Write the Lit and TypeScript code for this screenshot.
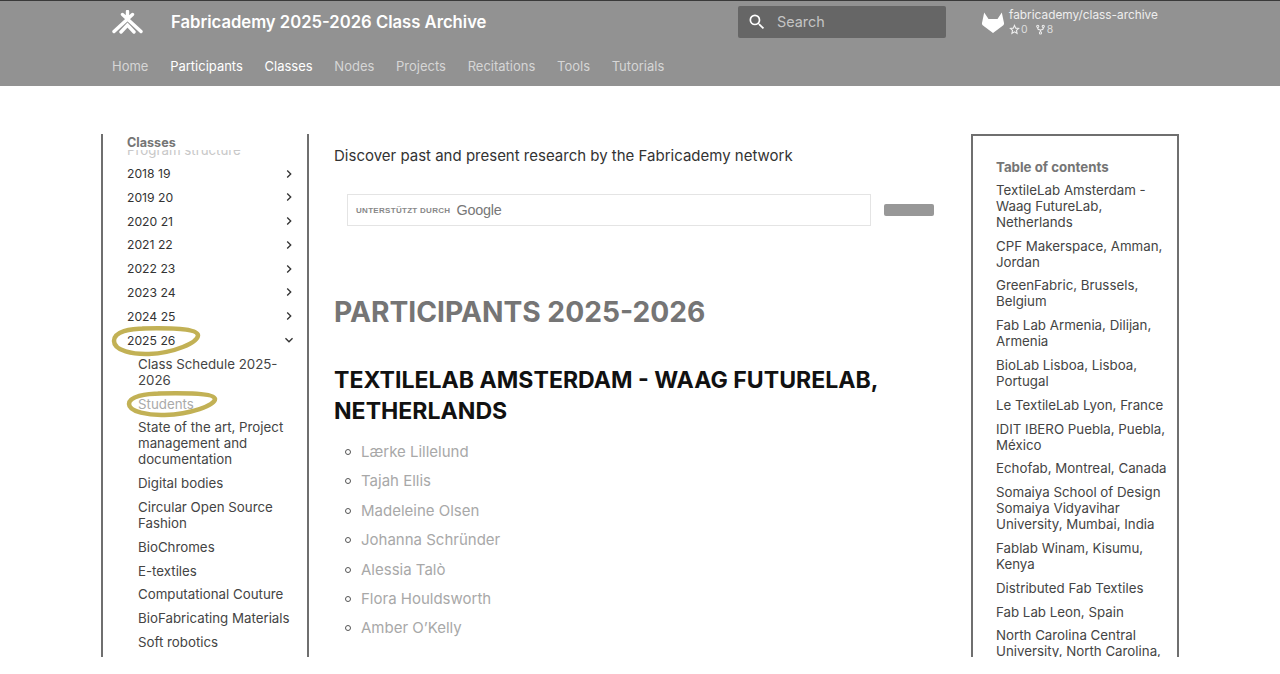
import { LitElement, html, css, svg } from 'lit';
import { customElement } from 'lit/decorators.js';

const tabs = ['Home', 'Participants', 'Classes', 'Nodes', 'Projects', 'Recitations', 'Tools', 'Tutorials'];
const years = ['2018 19', '2019 20', '2020 21', '2021 22', '2022 23', '2023 24', '2024 25'];
const classes = [
  'Class Schedule 2025-2026',
  'Students',
  'State of the art, Project management and documentation',
  'Digital bodies',
  'Circular Open Source Fashion',
  'BioChromes',
  'E-textiles',
  'Computational Couture',
  'BioFabricating Materials',
  'Soft robotics',
];
const students = ['Lærke Lillelund', 'Tajah Ellis', 'Madeleine Olsen', 'Johanna Schründer', 'Alessia Talò', 'Flora Houldsworth', 'Amber O’Kelly'];
const toc = [
  'TextileLab Amsterdam - Waag FutureLab, Netherlands',
  'CPF Makerspace, Amman, Jordan',
  'GreenFabric, Brussels, Belgium',
  'Fab Lab Armenia, Dilijan, Armenia',
  'BioLab Lisboa, Lisboa, Portugal',
  'Le TextileLab Lyon, France',
  'IDIT IBERO Puebla, Puebla, México',
  'Echofab, Montreal, Canada',
  'Somaiya School of Design Somaiya Vidyavihar University, Mumbai, India',
  'Fablab Winam, Kisumu, Kenya',
  'Distributed Fab Textiles',
  'Fab Lab Leon, Spain',
  'North Carolina Central University, North Carolina, USA',
];

const chevron = (open: boolean) => html`<svg class="chev" viewBox="0 0 24 24" width="16" height="16">
  <path d=${open ? 'M7.4 8.6 12 13.2l4.6-4.6L18 10l-6 6-6-6z' : 'M8.6 16.6 13.2 12 8.6 7.4 10 6l6 6-6 6z'} fill="#333"></path>
</svg>`;

// hand drawn marker ring
const ring = (cls: string, w: number, h: number) => html`<svg class="ring ${cls}" viewBox="0 0 ${w} ${h}" width=${w} height=${h}>
  ${svg`<path d="M${w * 0.42} 3.5C${w * 0.2} 3 3 7 3 ${h * 0.5}C3 ${h - 6} ${w * 0.25} ${h - 2.5} ${w * 0.42} ${h - 3}C${w * 0.7} ${h - 4} ${w - 3} ${h * 0.55} ${w - 3} ${h * 0.32}C${w - 4} 3 ${w * 0.65} 3 ${w * 0.35} 3.5" fill="none" stroke="#c2b155" stroke-width="4.500" stroke-linecap="round"></path>`}
</svg>`;

@customElement('app-root')
export class AppRoot extends LitElement {
  static styles = css`
    :host {
      display: block;
      height: 674px;
      overflow: hidden;
      background: #fff;
      font-family: Inter, 'Open Sans', sans-serif;
      color: #333;
    }
    header {
      height: 85px;
      background: #929292;
      border-top: 1px solid #3a3a3a;
      color: #fff;
    }
    .wrap {
      width: 1056px;
      margin: 0 auto;
    }
    .top {
      display: flex;
      align-items: center;
      height: 41px;
    }
    .logo {
      width: 31px;
      height: 24px;
      margin-right: 28px;
      flex: none;
    }
    .site {
      font-size: 16.65px;
      font-weight: 600;
      width: 567px;
      white-space: nowrap;
    }
    .search {
      width: 208px;
      height: 32px;
      background: #666;
      border-radius: 2px;
      display: flex;
      align-items: center;
      font-size: 14.4px;
      color: #c4c4c4;
      flex: none;
    }
    .search svg {
      margin: 0 10px 0 9px;
    }
    .repo {
      margin-left: 35px;
      display: flex;
      align-items: center;
      gap: 4px;
      font-size: 11.85px;
      color: #eee;
    }
    .repo .name {
      line-height: 15px;
      white-space: nowrap;
    }
    .facts {
      display: flex;
      gap: 7px;
      font-size: 10.5px;
      line-height: 13px;
      color: #ddd;
      align-items: center;
    }
    .facts span {
      display: flex;
      align-items: center;
      gap: 1px;
    }
    nav {
      display: flex;
      gap: 21.7px;
      font-size: 13px;
      line-height: 16px;
      margin-top: 16px;
      color: #d6d6d6;
    }
    nav .on {
      color: #fff;
    }
    main {
      width: 1078px;
      margin: 48px 0 0 101px;
      height: 523px;
      display: flex;
      overflow: hidden;
    }
    .side {
      width: 208px;
      box-sizing: border-box;
      border-left: 2px solid #6f6f6f;
      border-right: 2px solid #6f6f6f;
      padding-left: 24px;
      flex: none;
      position: relative;
    }
    .side h4 {
      margin: 0;
      font-size: 12.6px;
      font-weight: 700;
      color: #757575;
      line-height: 16px;
      padding-top: 1px;
      height: 15px;
      position: relative;
      background: #fff;
    }
    .clip {
      height: 10px;
      overflow: hidden;
      font-size: 13.3px;
      color: #c8c8c8;
      line-height: 10px;
    }
    .clip div {
      margin-top: -8px;
      line-height: 16px;
    }
    .year {
      display: flex;
      justify-content: space-between;
      align-items: center;
      width: 170px;
      font-size: 12.2px;
      height: 16px;
      margin-bottom: 7.8px;
      margin-top: 0;
      color: #333;
      position: relative;
    }
    .years {
      padding-top: 5.5px;
      position: relative;
    }
    .chev {
      margin-right: 0;
      flex: none;
    }
    .sub {
      padding-left: 11px;
      width: 158px;
    }
    .sub div {
      font-size: 13.3px;
      line-height: 16px;
      margin-bottom: 7.8px;
      color: #444;
    }
    .sub .active {
      color: #aaa;
    }
    .ring {
      position: absolute;
      pointer-events: none;
    }
    .ring.a {
      left: 8px;
      top: 191px;
    }
    .ring.b {
      left: 23px;
      top: 256px;
    }
    .content {
      width: 637px;
      flex: none;
      padding-left: 25px;
      box-sizing: border-box;
    }
    .intro {
      margin: 13px 0 0;
      font-size: 15px;
      line-height: 18px;
    }
    .cse {
      display: flex;
      align-items: center;
      margin: 29px 0 0 13px;
    }
    .cse-box {
      width: 524px;
      height: 32px;
      box-sizing: border-box;
      border: 1px solid #e4e4e4;
      display: flex;
      align-items: center;
      padding-left: 8px;
      font-family: 'Liberation Sans', sans-serif;
      font-size: 8px;
      font-weight: 700;
      color: #888;
      letter-spacing: 0.3px;
    }
    .cse-box b {
      font-size: 14.4px;
      font-weight: 400;
      letter-spacing: -0.2px;
      color: #777;
      margin-left: 6px;
    }
    .cse-btn {
      width: 50px;
      height: 12px;
      background: #989898;
      border-radius: 2px;
      margin-left: 13px;
    }
    h1 {
      margin: 67.5px 0 0;
      font-size: 28.2px;
      line-height: 36px;
      font-weight: 700;
      color: #757575;
      white-space: nowrap;
    }
    h2 {
      margin: 35.5px 0 0;
      font-size: 23.1px;
      line-height: 31px;
      font-weight: 700;
      color: #111;
      width: 560px;
    }
    ul {
      margin: 16px 0 0;
      padding: 0;
      list-style: none;
    }
    li {
      display: flex;
      align-items: center;
      font-size: 15px;
      line-height: 18px;
      margin-bottom: 11.4px;
      color: #a8a8a8;
    }
    li::before {
      content: '';
      width: 4px;
      height: 4px;
      border: 1px solid #555;
      border-radius: 50%;
      margin: 0 10px 0 11px;
    }
    .toc {
      margin-left: 25px;
      width: 208px;
      box-sizing: border-box;
      height: 540px;
      border: 2px solid #6f6f6f;
      padding: 22.5px 10px 0 23px;
      flex: none;
    }
    .toc h4 {
      margin: 0;
      font-size: 13.3px;
      font-weight: 700;
      line-height: 16px;
      color: #757575;
    }
    .toc h4 + div {
      margin-top: 7.3px;
    }
    .toc div {
      font-size: 13.3px;
      line-height: 16px;
      margin-top: 7.8px;
      color: #444;
    }
  `;

  render() {
    return html`
      <header>
        <div class="wrap">
          <div class="top">
            <svg class="logo" viewBox="0 0 31 24">
              <path d="M2 21.500 20.500 4.500M29 21.500 10.500 4.500M9 22l6.500-7 6.500 7M15.500 1.500v4" stroke="#fff" stroke-width="3.400" fill="none" stroke-linecap="round"></path>
            </svg>
            <div class="site">Fabricademy 2025-2026 Class Archive</div>
            <div class="search">
              <svg viewBox="0 0 24 24" width="20" height="20"><path fill="#fff" d="M9.500 3A6.500 6.500 0 0 1 16 9.500c0 1.610-.59 3.090-1.560 4.230l.27.27h.79l5 5-1.500 1.500-5-5v-.79l-.27-.27A6.516 6.516 0 0 1 9.500 16 6.500 6.500 0 0 1 3 9.500 6.500 6.500 0 0 1 9.500 3m0 2C7 5 5 7 5 9.500S7 14 9.500 14 14 12 14 9.500 12 5 9.500 5z"></path></svg>
              Search
            </div>
            <div class="repo">
              <svg viewBox="0 0 24 24" width="24" height="24"><path fill="#fff" d="M1 13 3.200 2.500 7.500 9h9l4.300-6.500L23 13c.2 1-.1 1.800-1 2.500L12 23 2 15.500c-.9-.7-1.200-1.500-1-2.500z"></path></svg>
              <div>
                <div class="name">fabricademy/class-archive</div>
                <div class="facts">
                  <span><svg viewBox="0 0 24 24" width="11" height="11"><path fill="none" stroke="#eee" stroke-width="2.400" d="m12 3 2.700 6 6.300.7-4.700 4.300 1.300 6.400L12 17.200l-5.600 3.200L7.700 14 3 9.700 9.300 9z"></path></svg>0</span>
                  <span><svg viewBox="0 0 24 24" width="11" height="11"><path fill="none" stroke="#eee" stroke-width="2.400" d="M6 7v3c0 2 2 3 6 3s6-1 6-3V7M12 13v4"></path><circle cx="6" cy="5" r="2.400" fill="none" stroke="#eee" stroke-width="2.200"></circle><circle cx="18" cy="5" r="2.400" fill="none" stroke="#eee" stroke-width="2.200"></circle><circle cx="12" cy="19.500" r="2.400" fill="none" stroke="#eee" stroke-width="2.200"></circle></svg>8</span>
                </div>
              </div>
            </div>
          </div>
          <nav>
            ${tabs.map(t => html`<span class=${t === 'Participants' || t === 'Classes' ? 'on' : ''}>${t}</span>`)}
          </nav>
        </div>
      </header>
      <main>
        <aside class="side">
          <h4>Classes</h4>
          <div class="clip"><div>Program structure</div></div>
          <div class="years">
            ${years.map(y => html`<div class="year">${y}${chevron(false)}</div>`)}
            <div class="year">2025 26${chevron(true)}</div>
            <div class="sub">
              ${classes.map(c => html`<div class=${c === 'Students' ? 'active' : ''}>${c}</div>`)}
            </div>
          </div>
          ${ring('a', 90, 32)}
          ${ring('b', 92, 28)}
        </aside>
        <section class="content">
          <p class="intro">Discover past and present research by the Fabricademy network</p>
          <div class="cse">
            <div class="cse-box">UNTERSTÜTZT DURCH <b>Google</b></div>
            <div class="cse-btn"></div>
          </div>
          <h1>PARTICIPANTS 2025-2026</h1>
          <h2>TEXTILELAB AMSTERDAM - WAAG FUTURELAB, NETHERLANDS</h2>
          <ul>${students.map(s => html`<li>${s}</li>`)}</ul>
        </section>
        <aside class="toc">
          <h4>Table of contents</h4>
          ${toc.map(t => html`<div>${t}</div>`)}
        </aside>
      </main>
    `;
  }
}
